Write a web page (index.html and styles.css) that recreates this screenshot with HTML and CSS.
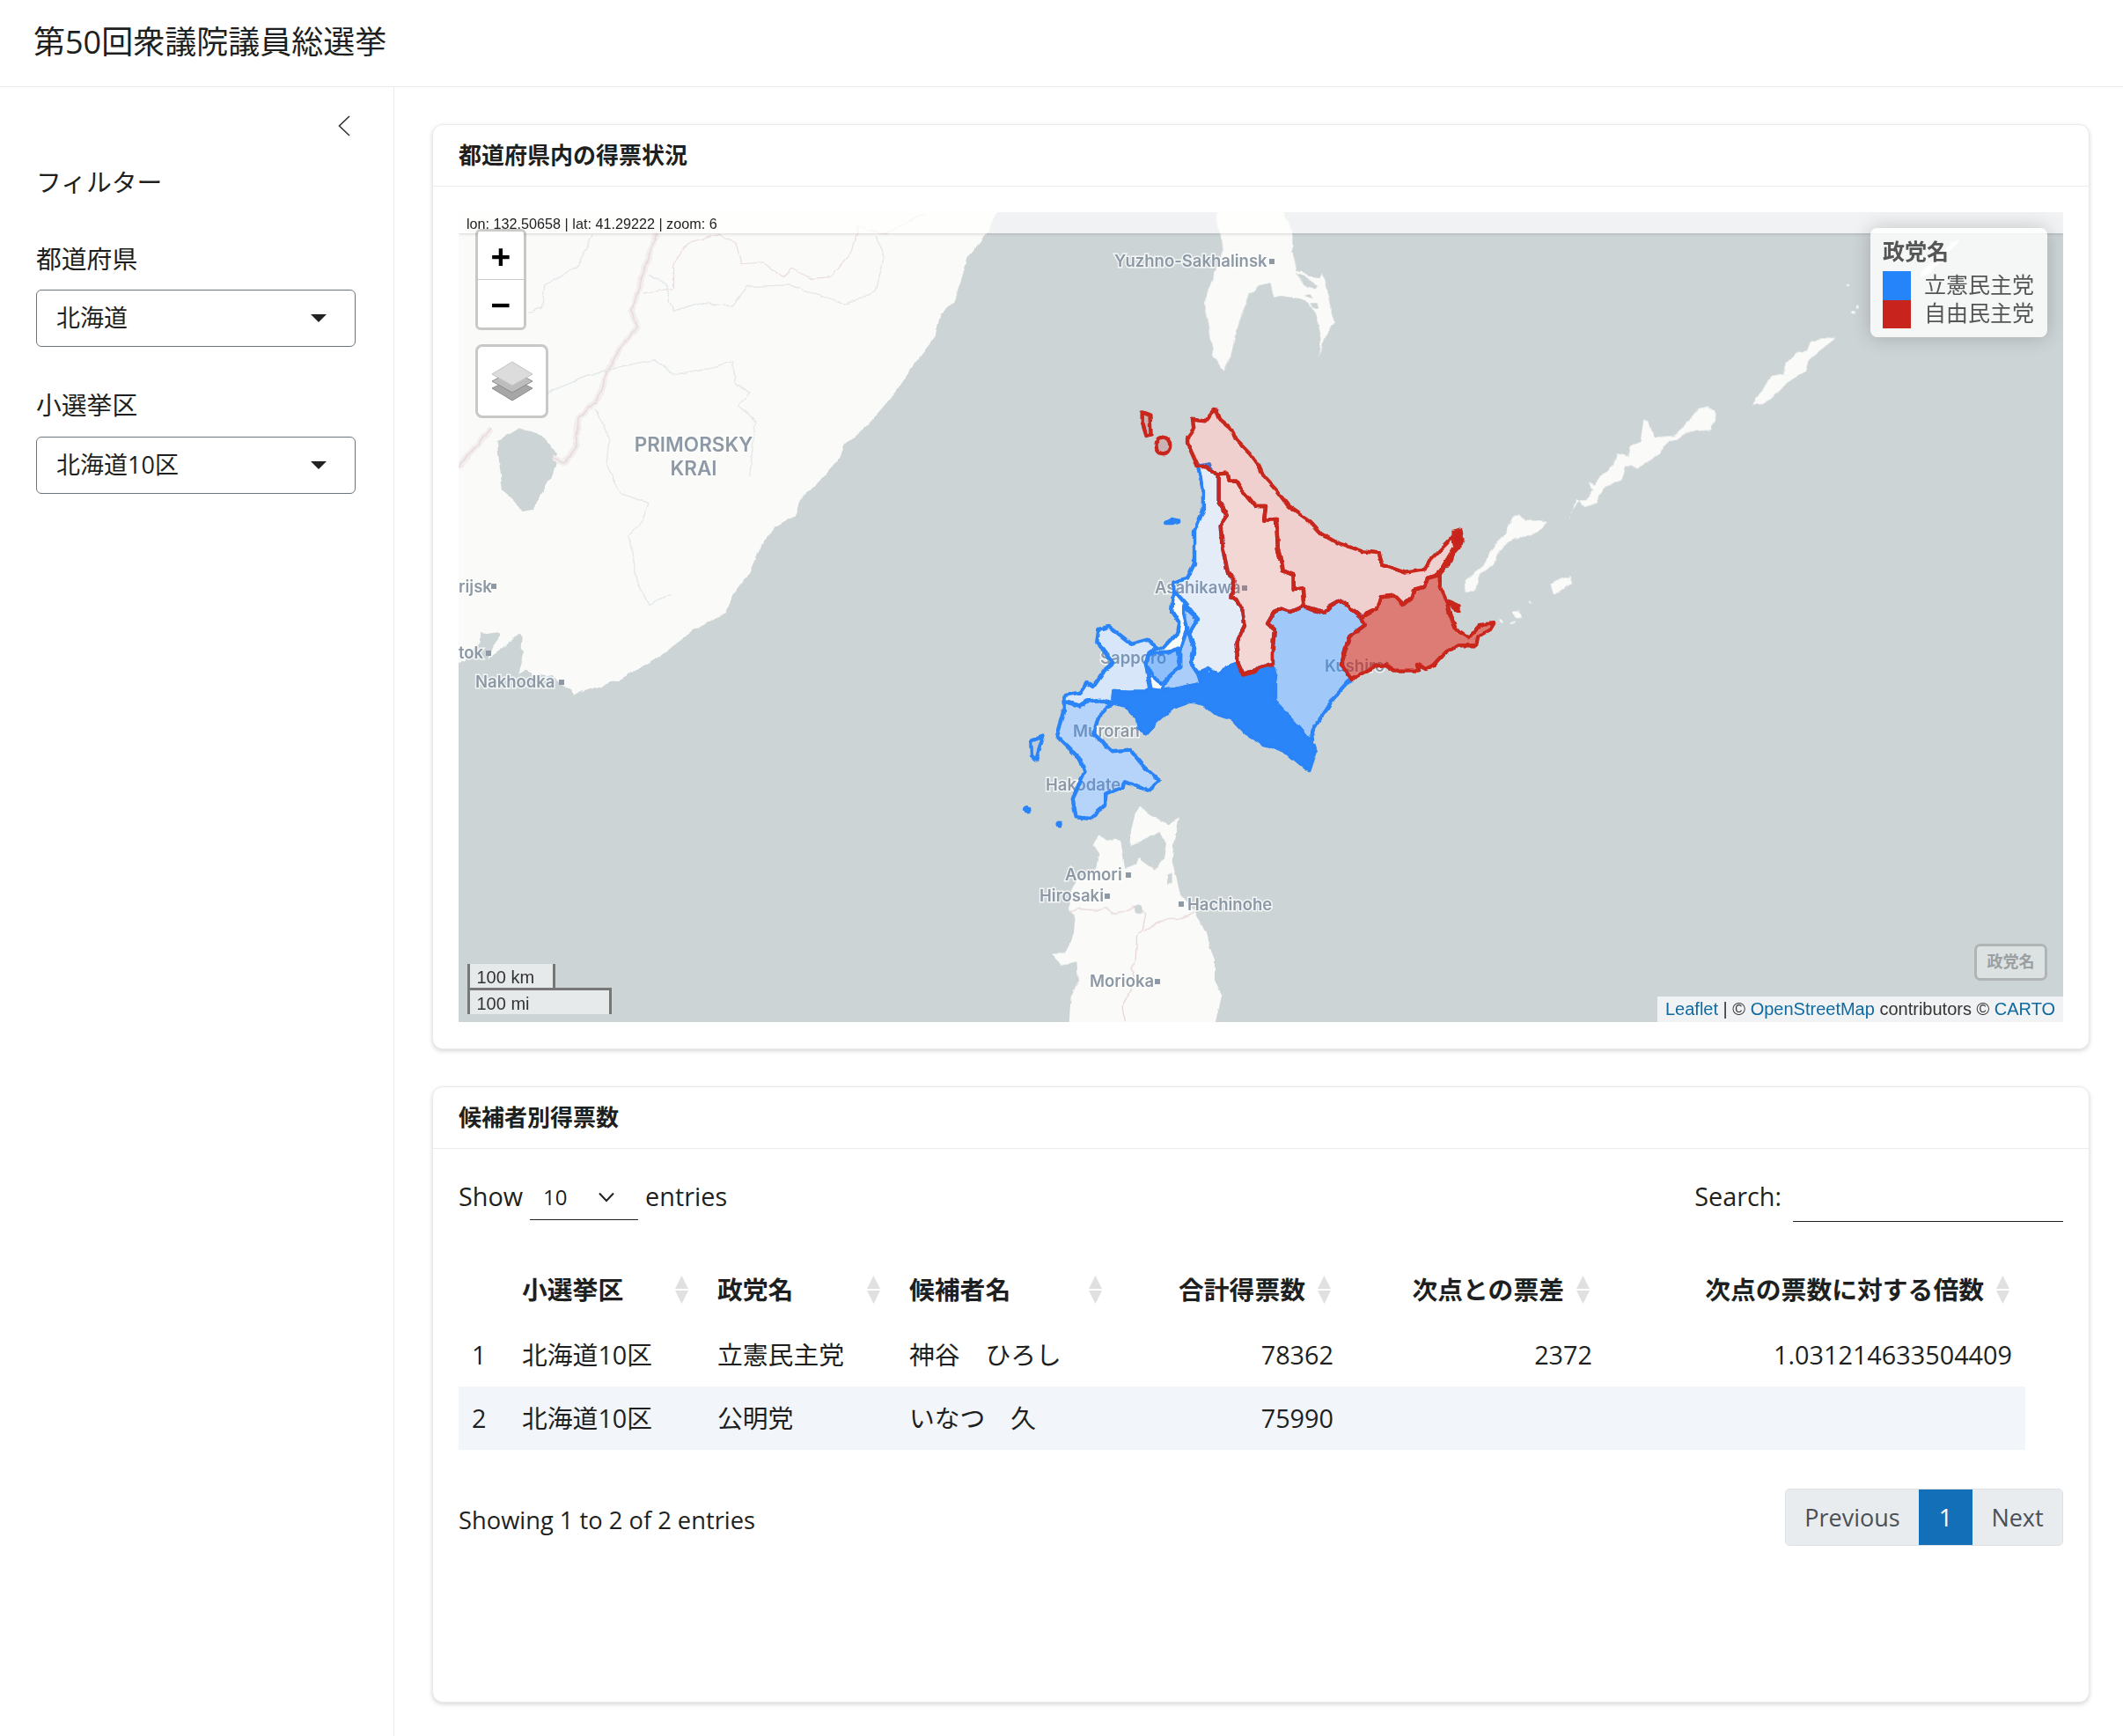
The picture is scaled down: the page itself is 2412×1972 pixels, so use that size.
FILE: index.html
```html
<!DOCTYPE html>
<html lang="ja">
<head>
<meta charset="utf-8">
<title>第50回衆議院議員総選挙</title>
<link rel="stylesheet" href="styles.css">
</head>
<body>
<header class="topbar"><h1 class="page-title">第50回衆議院議員総選挙</h1></header>
<div class="layout">
  <aside class="sidebar">
    <div class="toggle-row">
      <svg class="toggle" width="14" height="24" viewBox="0 0 14 24"><path d="M13 1 1.5 12 13 23" fill="none" stroke="#333" stroke-width="1.6"/></svg>
    </div>
    <h2 class="filter-title">フィルター</h2>
    <label class="field-label">都道府県</label>
    <div class="select-box"><span>北海道</span><i class="caret"></i></div>
    <label class="field-label">小選挙区</label>
    <div class="select-box"><span>北海道10区</span><i class="caret"></i></div>
  </aside>
  <main class="main">
    <section class="card card-map">
      <div class="card-header">都道府県内の得票状況</div>
      <div class="card-body">
        <div class="map">
          <svg class="map-svg" viewBox="521 241 1823 920" width="1823" height="920">
            <defs>
              <filter id="rough" filterUnits="userSpaceOnUse" x="480" y="200" width="1900" height="1000">
                <feTurbulence type="fractalNoise" baseFrequency=".09" numOctaves="2" seed="3" result="n"/>
                <feDisplacementMap in="SourceGraphic" in2="n" scale="4.5" xChannelSelector="R" yChannelSelector="G"/>
              </filter>
            </defs>
            <rect x="521" y="241" width="1823" height="920" fill="#cdd4d6"/>
            <g filter="url(#rough)">
              <!-- mainland -->
              <g transform="translate(520 235) scale(.6378 .37)">
                <path fill="#fafaf8" d="M-30 -30 980 -30 960 16 940 90 910 150 885 290 860 330 850 400 810 490 770 590 730 670 690 730 680 770 640 850 610 900 600 950 565 985 540 1040 520 1120 490 1190 475 1250 420 1300 360 1380 290 1450 240 1480 205 1500 -30 1500Z"/>
                <path fill="#cdd4d6" d="M110 680 150 700 178 760 170 820 150 880 135 930 115 935 100 900 80 870 75 800 70 720Z"/>
                <g fill="none" stroke-linejoin="round">
                  <path stroke="#f3eeee" stroke-width="7" vector-effect="non-scaling-stroke" d="M355 80 340 150 310 320 320 370 290 430 265 510 250 590 215 650 210 740 190 785 170 770M60 680 30 740 2 800"/>
                  <path stroke="#e8dadb" stroke-width="1.6" vector-effect="non-scaling-stroke" d="M355 80 340 150 310 320 320 370 290 430 265 510 250 590 215 650 210 740 190 785 170 770M60 680 30 740 2 800"/>
                  <path stroke="#ecdee0" stroke-width="1.2" vector-effect="non-scaling-stroke" d="M830 20 760 85 715 60 700 140 665 215 630 220 595 190 580 215 545 170 505 175 495 110 465 85 410 110 385 170 385 250 330 265"/>
                  <path stroke="#e2e7e9" stroke-width="1.3" vector-effect="non-scaling-stroke" d="M240 85 215 180 155 240 150 310 125 325M340 210 375 240 375 290 385 320 430 295 490 305 515 245 590 240 640 270 690 300 745 260 760 150 745 90M160 570 230 520 290 490 350 470 385 515 460 490 490 475 495 545 520 570 500 610 530 660 520 830M245 620 270 710 265 790 290 880 340 910 330 960 305 1010 320 1150 340 1220 380 1190"/>
                </g>
              </g>
              <!-- peter the great bay -->
              <g transform="translate(521 640) scale(.3333)">
                <path fill="#cdd4d6" d="M-40 345 20 335 50 290 75 270 75 230 95 240 130 235 145 240 120 275 110 300 100 325 150 290 205 240 218 250 215 290 225 300 215 340 205 380 230 365 250 375 300 385 320 380 345 410 385 430 390 450 430 430 392 470 -40 480Z"/>
              </g>
              <!-- sakhalin -->
              <g transform="translate(1340 241) scale(.3333)">
                <path fill="#fafaf8" d="M130 -30 125 40 145 90 148 130 130 180 100 260 85 310 100 380 115 490 150 540 175 490 190 420 215 340 240 280 270 250 310 240 322 290 350 285 410 295 435 305 465 350 480 410 478 495 490 440 520 385 528 372 515 330 505 270 490 208 475 225 440 220 420 205 400 200 385 130 385 70 370 30 340 -30Z"/>
                <path fill="#cdd4d6" d="M398 205 420 215 470 250 465 262 425 250 410 225ZM425 285 445 280 455 295ZM445 310 470 310 472 328 455 330Z"/>
              </g>
              <!-- kurils -->
              <g transform="translate(1500 235) scale(.3827 .3333)" fill="#fafaf8">
                <path d="M590 1045 610 1070 670 1070 660 1095 625 1120 575 1130 530 1170 515 1215 470 1260 460 1310 430 1310 428 1275 480 1230 510 1170 550 1110 570 1060Z"/>
                <path d="M740 1070 745 1040 770 1000 785 1020 820 1005 840 960 895 930 905 880 940 890 985 860 1040 800 1100 765 1160 760 1170 730 1172 695 1150 683 1120 690 1085 740 1050 780 990 785 975 730 960 725 950 800 920 820 915 850 880 840 870 880 830 920 815 950 795 940 810 965 790 1000 760 1000 740 1060Z"/>
                <path d="M1283 673 1310 672 1345 650 1385 600 1440 560 1450 520 1530 447 1490 445 1455 460 1445 490 1415 495 1385 530 1375 570 1335 580 1310 630Z"/>
                <path d="M680 1285 740 1258 748 1280 695 1320ZM570 1380 590 1375 596 1400 580 1402ZM530 1405 545 1415 535 1418ZM615 1342 630 1350 618 1350ZM560 1420 578 1410 572 1422Z"/>
              </g>
              <g transform="translate(1900 230) scale(.3333)" fill="#fafaf8">
                <path d="M845 255 880 240 930 180 980 130 950 135 900 190 850 235Z"/>
                <circle cx="598" cy="283" r="5"/><circle cx="632" cy="355" r="6"/><circle cx="618" cy="376" r="6"/>
              </g>
              <!-- tohoku -->
              <g transform="translate(1150 880) scale(.3333)">
                <path fill="#fafaf8" d="M435 110 470 135 530 170 570 148 550 230 545 300 560 350 570 400 625 470 660 540 670 580 690 630 690 700 715 750 680 900 190 900 200 760 225 700 220 640 165 650 135 610 180 610 210 540 215 480 195 460 200 400 220 360 285 320 295 270 275 240 295 205 325 225 350 215 370 230 385 320 420 305 430 285 450 300 485 325 515 290 525 235 505 195 460 215 400 240 405 190 420 130Z"/>
                <path fill="none" stroke="#e8d6d8" stroke-width="1.3" vector-effect="non-scaling-stroke" d="M197 468 225 458 290 462 315 452 350 475 380 470 420 450 455 470 445 530 425 545 420 640 405 655 415 690 405 735 375 790 385 840M450 535 490 510 530 490 580 490 620 468"/>
                <ellipse cx="430" cy="460" rx="13" ry="14" fill="#cdd4d6"/>
                <path fill="#cdd4d6" d="M530 340 545 335 545 365 528 375Z"/>
              </g>
              <!-- hokkaido land -->
              <g transform="translate(1100 440) scale(.3954 .3333)">
                <path fill="#fafaf8" d="M660 270 630 190 630 170 648 140 645 110 680 115 705 78 715 80 725 110 755 140 765 170 810 225 835 265 850 305 885 350 920 405 975 450 1015 500 1060 530 1130 558 1180 565 1190 605 1255 632 1310 622 1330 585 1385 520 1405 490 1415 540 1375 590 1355 640 1355 680 1375 730 1385 780 1400 820 1440 855 1470 810 1510 805 1500 825 1465 850 1460 880 1410 880 1375 900 1340 945 1315 960 1290 945 1295 965 1225 965 1200 945 1170 950 1100 995 1050 1060 1010 1130 990 1170 985 1210 998 1240 980 1305 970 1300 910 1240 850 1215 800 1180 760 1130 710 1110 680 1080 640 1070 590 1090 540 1140 510 1180 490 1160 485 1130 450 1085 415 1075 410 1080 375 1120 360 1180 415 1240 465 1235 510 1300 550 1340 520 1375 450 1345 440 1365 395 1385 395 1425 350 1470 310 1465 300 1400 335 1310 320 1265 255 1190 275 1110 275 1070 280 1050 320 1040 340 1005 360 1020 395 960 415 940 385 890 370 870 375 825 405 815 470 875 515 860 545 890 560 890 600 840 605 800 585 760 590 665 630 650 650 600 650 490 675 420 675 350Z"/>
              </g>
            </g>
            <!-- labels (below the translucent districts) -->
            <g class="map-label">
              <text x="1266" y="303">Yuzhno-Sakhalinsk</text>
              <text class="region" x="788" y="513" text-anchor="middle">PRIMORSKY</text>
              <text class="region" x="788" y="540" text-anchor="middle">KRAI</text>
              <text x="521" y="673">rijsk</text>
              <text x="521" y="748">tok</text>
              <text x="540" y="781">Nakhodka</text>
              <text x="1312" y="674">Asahikawa</text>
              <text x="1250" y="754">Sapporo</text>
              <text x="1505" y="763">Kushiro</text>
              <text x="1219" y="837">Muroran</text>
              <text x="1188" y="898">Hakodate</text>
              <text x="1210" y="1000">Aomori</text>
              <text x="1181" y="1024">Hirosaki</text>
              <text x="1349" y="1034">Hachinohe</text>
              <text x="1238" y="1121">Morioka</text>
            </g>
            <g fill="#8d9aa6">
              <rect x="1442" y="294" width="6" height="6"/><rect x="558" y="663" width="6" height="6"/><rect x="552" y="739" width="6" height="6"/><rect x="635" y="772" width="6" height="6"/><rect x="1411" y="665" width="6" height="6"/><rect x="1279" y="991" width="6" height="6"/><rect x="1255" y="1015" width="6" height="6"/><rect x="1339" y="1024" width="6" height="6"/><rect x="1312" y="1112" width="6" height="6"/>
            </g>
            <!-- hokkaido districts -->
            <g filter="url(#rough)">
            <g transform="translate(1100 440) scale(.3954 .3333)" stroke-linejoin="round" stroke-width="4.4">
              <g stroke="#2a84f7" fill="#2684fb">
                <path vector-effect="non-scaling-stroke" fill-opacity=".425" d="M880 765 900 755 925 765 965 745 1020 770 1040 745 1070 725 1130 785 1140 810 1095 850 1072 945 1100 995 1050 1060 1010 1130 990 1170 985 1210 935 1140 880 1070 880 980 875 945 875 890 880 825 860 805Z"/>
                <path vector-effect="non-scaling-stroke" fill-opacity=".108" d="M660 270 690 262 700 290 720 295 720 390 745 435 725 470 730 540 735 570 745 625 765 660 755 715 770 720 790 765 795 810 770 870 775 940 740 955 720 985 690 960 660 975 640 940 650 890 635 840 660 790 630 745 590 690 590 665 630 650 650 600 650 490 675 420 675 350Z"/>
                <path vector-effect="non-scaling-stroke" fill-opacity=".38" d="M620 745 660 790 635 840 650 890 640 940 660 975 670 1010 590 1030 555 1035 580 980 610 950 610 890 630 820 620 770Z"/>
                <path vector-effect="non-scaling-stroke" fill-opacity=".17" d="M375 825 405 815 470 875 515 860 545 890 520 905 510 940 525 1030 510 1040 460 1040 418 1038 415 1075 380 1065 340 1070 320 1085 275 1070 280 1050 320 1040 340 1005 360 1020 395 960 415 940 385 890 370 870Z"/>
                <path vector-effect="non-scaling-stroke" fill-opacity=".5" d="M520 905 575 905 600 890 610 950 580 980 555 1010 530 985 510 940Z"/>
                <path vector-effect="non-scaling-stroke" fill="none" d="M590 690 585 760 605 800 600 840 560 890 545 890"/>
                <path vector-effect="non-scaling-stroke" fill-opacity=".325" d="M275 1070 320 1085 340 1070 380 1065 410 1080 375 1120 360 1180 415 1240 465 1235 510 1300 550 1340 520 1375 450 1345 440 1365 395 1385 395 1425 350 1470 310 1465 300 1400 335 1310 320 1265 255 1190 275 1110Z"/>
                <path vector-effect="non-scaling-stroke" fill="#2a86f8" d="M775 940 790 980 820 970 835 955 875 945 885 990 870 1030 880 1070 935 1140 985 1210 998 1240 980 1305 970 1300 910 1240 850 1215 800 1180 760 1130 710 1110 680 1080 640 1070 590 1090 540 1140 510 1180 490 1160 485 1130 450 1085 415 1075 418 1038 460 1040 510 1040 525 1030 555 1035 590 1030 670 1010 670 970 720 985 740 955Z"/>
                <path vector-effect="non-scaling-stroke" fill="#2a86f8" d="M567 462 585 450 605 455 590 462Z"/>
                <path vector-effect="non-scaling-stroke" fill-opacity=".1" d="M180 1205 215 1190 195 1270 182 1255Z"/>
                <ellipse vector-effect="non-scaling-stroke" cx="170" cy="1438" rx="8" ry="6" fill="#2a86f8"/>
                <ellipse vector-effect="non-scaling-stroke" cx="262" cy="1488" rx="5" ry="4" fill="#2a86f8"/>
              </g>
              <g stroke="#c9251e" fill="#c9231d">
                <path vector-effect="non-scaling-stroke" fill-opacity=".2" d="M645 110 680 115 705 78 715 80 725 110 755 140 765 170 810 225 835 265 850 305 885 350 920 405 975 450 1015 500 1060 530 1130 558 1180 565 1190 605 1255 632 1310 622 1330 585 1385 520 1405 490 1415 540 1375 590 1350 640 1320 650 1310 680 1280 690 1275 715 1250 740 1225 710 1185 715 1175 755 1140 775 1130 785 1070 725 1040 745 1020 770 965 745 960 685 935 690 935 640 905 625 890 550 885 450 850 452 855 405 825 405 805 375 785 350 770 320 750 320 745 293 720 295 700 290 680 270 660 270 630 190 630 170 648 140Z"/>
                <path vector-effect="non-scaling-stroke" fill-opacity=".17" d="M720 295 745 293 750 320 770 320 785 350 805 375 825 405 855 405 850 452 885 450 890 550 905 625 935 640 935 690 960 685 965 745 925 765 900 755 880 765 860 805 880 825 875 890 875 945 835 955 820 970 790 980 775 940 770 870 795 810 790 765 770 720 755 715 765 660 745 625 735 570 730 540 725 470 745 435 720 390Z"/>
                <path vector-effect="non-scaling-stroke" fill-opacity=".6" d="M1130 785 1175 755 1185 715 1225 710 1250 740 1275 715 1280 690 1310 680 1320 650 1350 640 1375 590 1400 540 1385 590 1355 640 1355 680 1375 730 1385 780 1400 820 1440 855 1470 810 1510 805 1500 825 1465 850 1460 880 1410 880 1375 900 1340 945 1315 960 1290 945 1295 965 1225 965 1200 945 1170 950 1100 995 1072 945 1095 850 1140 810Z"/>
                <path vector-effect="non-scaling-stroke" d="M1395 490 1415 485 1420 520 1410 545 1400 550 1395 520Z"/>
                <path vector-effect="non-scaling-stroke" d="M1380 730 1410 745 1410 760 1395 755Z"/>
                <path vector-effect="non-scaling-stroke" fill-opacity=".2" d="M500 85 522 95 525 160 512 165 500 120Z"/>
                <ellipse vector-effect="non-scaling-stroke" cx="560" cy="198" rx="20" ry="28" fill-opacity=".2"/>
              </g>
            </g>
            </g>
          </svg>
          <div class="coord-bar">lon: 132.50658 | lat: 41.29222 | zoom: 6</div>
          <div class="zoom-ctl"><span class="zoom-btn">+</span><span class="zoom-btn">−</span></div>
          <div class="layers-btn">
            <svg width="48" height="46" viewBox="0 0 48 46">
              <path d="M24 20 47 31 24 45 1 31Z" fill="#a6a6a6" stroke="#8c8c8c"/>
              <path d="M24 11 47 23 24 36 1 23Z" fill="#bdbdbd" stroke="#8c8c8c"/>
              <path d="M24 1 47 15 24 28 1 15Z" fill="#dcdcdc" stroke="#c4c4c4"/>
            </svg>
          </div>
          <div class="legend">
            <div class="legend-title">政党名</div>
            <div class="legend-row"><i class="swatch swatch-blue"></i><span>立憲民主党</span></div>
            <div class="legend-row"><i class="swatch swatch-red"></i><span>自由民主党</span></div>
          </div>
          <div class="legend-toggle">政党名</div>
          <div class="scale">
            <div class="scale-km">100 km</div>
            <div class="scale-mi">100 mi</div>
          </div>
          <div class="attribution"><a>Leaflet</a> | © <a>OpenStreetMap</a> contributors © <a>CARTO</a></div>
        </div>
      </div>
    </section>
    <section class="card card-table">
      <div class="card-header">候補者別得票数</div>
      <div class="card-body">
        <div class="dt-top">
          <div class="dt-length"><span>Show</span><div class="dt-select"><span>10</span><svg width="18" height="12" viewBox="0 0 18 12"><path d="M1 1.5 9 10l8-8.5" fill="none" stroke="#222" stroke-width="2"/></svg></div><span>entries</span></div>
          <div class="dt-search"><span>Search:</span><div class="dt-input"></div></div>
        </div>
        <table class="dt-table">
          <colgroup><col class="c0"><col class="c1"><col class="c2"><col class="c3"><col class="c4"><col class="c5"><col class="c6"></colgroup>
          <thead>
            <tr>
              <th></th>
              <th>小選挙区<svg class="sort" width="15" height="32" viewBox="0 0 15 32"><path d="M7.5 0 15 15H0ZM0 17h15L7.5 32Z" fill="#e0e0e0"/></svg></th>
              <th>政党名<svg class="sort" width="15" height="32" viewBox="0 0 15 32"><path d="M7.5 0 15 15H0ZM0 17h15L7.5 32Z" fill="#e0e0e0"/></svg></th>
              <th>候補者名<svg class="sort" width="15" height="32" viewBox="0 0 15 32"><path d="M7.5 0 15 15H0ZM0 17h15L7.5 32Z" fill="#e0e0e0"/></svg></th>
              <th class="num">合計得票数<svg class="sort" width="15" height="32" viewBox="0 0 15 32"><path d="M7.5 0 15 15H0ZM0 17h15L7.5 32Z" fill="#e0e0e0"/></svg></th>
              <th class="num">次点との票差<svg class="sort" width="15" height="32" viewBox="0 0 15 32"><path d="M7.5 0 15 15H0ZM0 17h15L7.5 32Z" fill="#e0e0e0"/></svg></th>
              <th class="num">次点の票数に対する倍数<svg class="sort" width="15" height="32" viewBox="0 0 15 32"><path d="M7.5 0 15 15H0ZM0 17h15L7.5 32Z" fill="#e0e0e0"/></svg></th>
            </tr>
          </thead>
          <tbody>
            <tr><td>1</td><td>北海道10区</td><td>立憲民主党</td><td>神谷　ひろし</td><td class="num">78362</td><td class="num">2372</td><td class="num">1.031214633504409</td></tr>
            <tr class="striped"><td>2</td><td>北海道10区</td><td>公明党</td><td>いなつ　久</td><td class="num">75990</td><td class="num"></td><td class="num"></td></tr>
          </tbody>
        </table>
        <div class="dt-bottom">
          <div class="dt-info">Showing 1 to 2 of 2 entries</div>
          <div class="pager"><span class="page prev">Previous</span><span class="page current">1</span><span class="page next">Next</span></div>
        </div>
      </div>
    </section>
  </main>
</div>
</body>
</html>
```
FILE: styles.css
```css
* { box-sizing: border-box; }
html, body { margin: 0; padding: 0; }
body {
  width: 2412px;
  height: 1972px;
  overflow: hidden;
  background: #fff;
  color: #1d1f21;
  font-family: "Open Sans", "Noto Sans CJK JP", sans-serif;
  font-size: 28.8px;
  line-height: 40px;
}
.topbar {
  height: 99px;
  border-bottom: 1px solid #e9ecef;
  padding: 0 0 3px 38px;
  display: flex;
  align-items: center;
}
.page-title { margin: 0; font-size: 36px; font-weight: 400; line-height: 50px; }
.layout { display: flex; height: 1873px; }
.sidebar {
  width: 448px;
  flex: none;
  border-right: 1px solid #e9ecef;
  padding: 32px 0 0 41px;
}
.toggle-row { display: flex; justify-content: flex-end; padding-right: 49px; height: 24px; margin-bottom: 32px; }
.toggle { display: block; }
.filter-title { margin: 0 0 47px; font-size: 28.8px; font-weight: 400; line-height: 40px; }
.field-label { display: block; line-height: 40px; margin-bottom: 15px; }
.select-box {
  width: 363px;
  height: 65px;
  border: 1px solid #6c757d;
  border-radius: 6px;
  padding: 0 32px 2px 22px;
  display: flex;
  align-items: center;
  justify-content: space-between;
  margin-bottom: 46px;
  font-size: 27px;
}
.select-box + .field-label { margin-bottom: 16px; }
.caret { width: 0; height: 0; margin-top: 2px; border-left: 9px solid transparent; border-right: 9px solid transparent; border-top: 9px solid #222; }
.main { flex: 1; padding: 42px 38px 0 43px; min-width: 0; }
.card {
  border: 1px solid #e8eaec;
  border-radius: 12px;
  background: #fff;
  box-shadow: 0 2px 5px rgba(0,0,0,.16);
  overflow: hidden;
}
.card-table { margin-top: 42px; height: 700px; }
.card-header {
  height: 70px;
  border-bottom: 1px solid #e9ecef;
  padding: 0 0 2px 29px;
  display: flex;
  align-items: center;
  font-weight: 700;
  font-size: 26px;
  color: #1d1f21;
}
.card-body { padding: 29px 29px 30px; }
.map { position: relative; width: 1823px; height: 920px; overflow: hidden; background: #cdd4d6; font-family: "Liberation Sans", Arial, sans-serif; }
.map-svg { display: block; }
.map-label text {
  font-family: Inter, "Open Sans", sans-serif;
  font-size: 18.5px;
  font-weight: 600;
  fill: #8d9aa6;
  stroke: #fff;
  stroke-width: 3px;
  stroke-opacity: .75;
  paint-order: stroke;
}
.map-label .region { font-size: 22.5px; }
.coord-bar {
  position: absolute; left: 0; top: 0; right: 0; height: 24px;
  background: rgba(255,255,255,.7);
  box-shadow: 0 1px 3px rgba(0,0,0,.15);
  padding-left: 9px;
  font-size: 16.2px;
  line-height: 26px;
  color: #222;
}
.zoom-ctl {
  position: absolute; left: 19px; top: 19px; width: 58px; height: 115px;
  border: 3px solid rgba(0,0,0,.2);
  border-radius: 6px;
  background-clip: padding-box;
  display: flex; flex-direction: column;
}
.zoom-btn {
  flex: 1; display: flex; align-items: center; justify-content: center;
  padding-top: 3px;
  background: #fff; color: #000;
  font-family: "Liberation Sans", sans-serif;
  font-weight: 700; font-size: 39px; line-height: 1;
}
.zoom-btn:first-child { border-bottom: 1px solid #ccc; border-radius: 4px 4px 0 0; }
.zoom-btn:last-child { border-radius: 0 0 4px 4px; }
.layers-btn {
  position: absolute; left: 19px; top: 150px; width: 83px; height: 84px;
  border: 3px solid rgba(0,0,0,.2);
  border-radius: 8px;
  background: #fff; background-clip: padding-box;
  display: flex; align-items: center; justify-content: center;
}
.legend {
  position: absolute; left: 1604px; top: 18px; width: 201px; height: 124px;
  background: rgba(255,255,255,.8);
  border-radius: 8px;
  box-shadow: 0 0 22px rgba(0,0,0,.2);
  padding: 12px 15px 0 14px;
  font-family: "Open Sans", "Noto Sans CJK JP", sans-serif;
  font-size: 25px; line-height: 32px;
  color: #555;
}
.legend-title { font-weight: 700; height: 37px; line-height: 28px; }
.legend-row { display: flex; justify-content: space-between; height: 32.5px; align-items: center; }
.legend-row span { padding-bottom: 3px; }
.swatch { width: 32px; height: 100%; display: block; }
.swatch-blue { background: #2684fb; }
.swatch-red { background: #c9231d; }
.legend-toggle {
  position: absolute; left: 1722px; top: 831px; width: 83px; height: 42px;
  border: 3px solid rgba(0,0,0,.2);
  border-radius: 7px;
  background: rgba(255,255,255,.3);
  color: #9a9fa2;
  font-family: "Open Sans", "Noto Sans CJK JP", sans-serif;
  font-weight: 700;
  font-size: 18px; line-height: 34px; text-align: center;
}
.scale { position: absolute; left: 9.5px; top: 854px; font-size: 20px; line-height: 30px; color: #333; }
.scale-km { width: 100px; height: 30px; border: 3px solid #777; border-top: 0; padding-left: 8px; background: rgba(255,255,255,.5); }
.scale-mi { width: 164px; height: 30px; margin-top: -3px; border: 3px solid #777; border-bottom: 0; padding-left: 8px; background: rgba(255,255,255,.5); }
.attribution {
  position: absolute; right: 0; bottom: 0; height: 29px; width: 461px;
  background: rgba(255,255,255,.7);
  padding-left: 9px;
  font-size: 20px; line-height: 29px; color: #333;
  white-space: nowrap;
}
.attribution a { color: #0f6aa1; }
.dt-top { display: flex; justify-content: space-between; height: 54px; }
.dt-length { display: flex; align-items: center; height: 49px; }
.dt-select {
  align-self: flex-start;
  width: 123px; height: 52px; margin: 0 8px 0 8px;
  border-bottom: 1px solid #222;
  padding: 0 27px 0 15px;
  display: flex; align-items: center; justify-content: space-between;
  font-size: 24px;
}
.dt-search { display: flex; align-items: center; height: 50px; }
.dt-input { align-self: flex-start; width: 307px; height: 54px; margin-left: 13px; border-bottom: 1px solid #222; }
.dt-table { width: 1780px; margin-top: 42px; table-layout: fixed; border-collapse: collapse; }
.c0 { width: 57px; } .c1 { width: 222px; } .c2 { width: 218px; } .c3 { width: 252px; }
.c4 { width: 260px; } .c5 { width: 294px; } .c6 { width: 477px; }
.dt-table th { position: relative; height: 73px; padding: 0 47px 3px 15px; text-align: left; font-weight: 700; white-space: nowrap; }
.dt-table td { height: 72px; padding: 0 15px 1px; white-space: nowrap; }
.dt-table th.num { text-align: right; }
.dt-table td.num { text-align: right; }
.sort { position: absolute; right: 18px; top: 19px; }
.striped td { background: #f2f6fa; }
.dt-bottom { display: flex; justify-content: space-between; margin-top: 44px; }
.dt-info { padding-top: 16px; font-size: 27.3px; }
.pager { display: flex; height: 65px; border-radius: 5px; overflow: hidden; border: 1px solid #dde1e5; color: #495057; font-size: 27px; }
.page { display: flex; align-items: center; justify-content: center; background: #e9ecef; }
.prev { width: 151px; }
.current { width: 61px; background: #126fb8; color: #fff; }
.next { width: 102px; }
```
